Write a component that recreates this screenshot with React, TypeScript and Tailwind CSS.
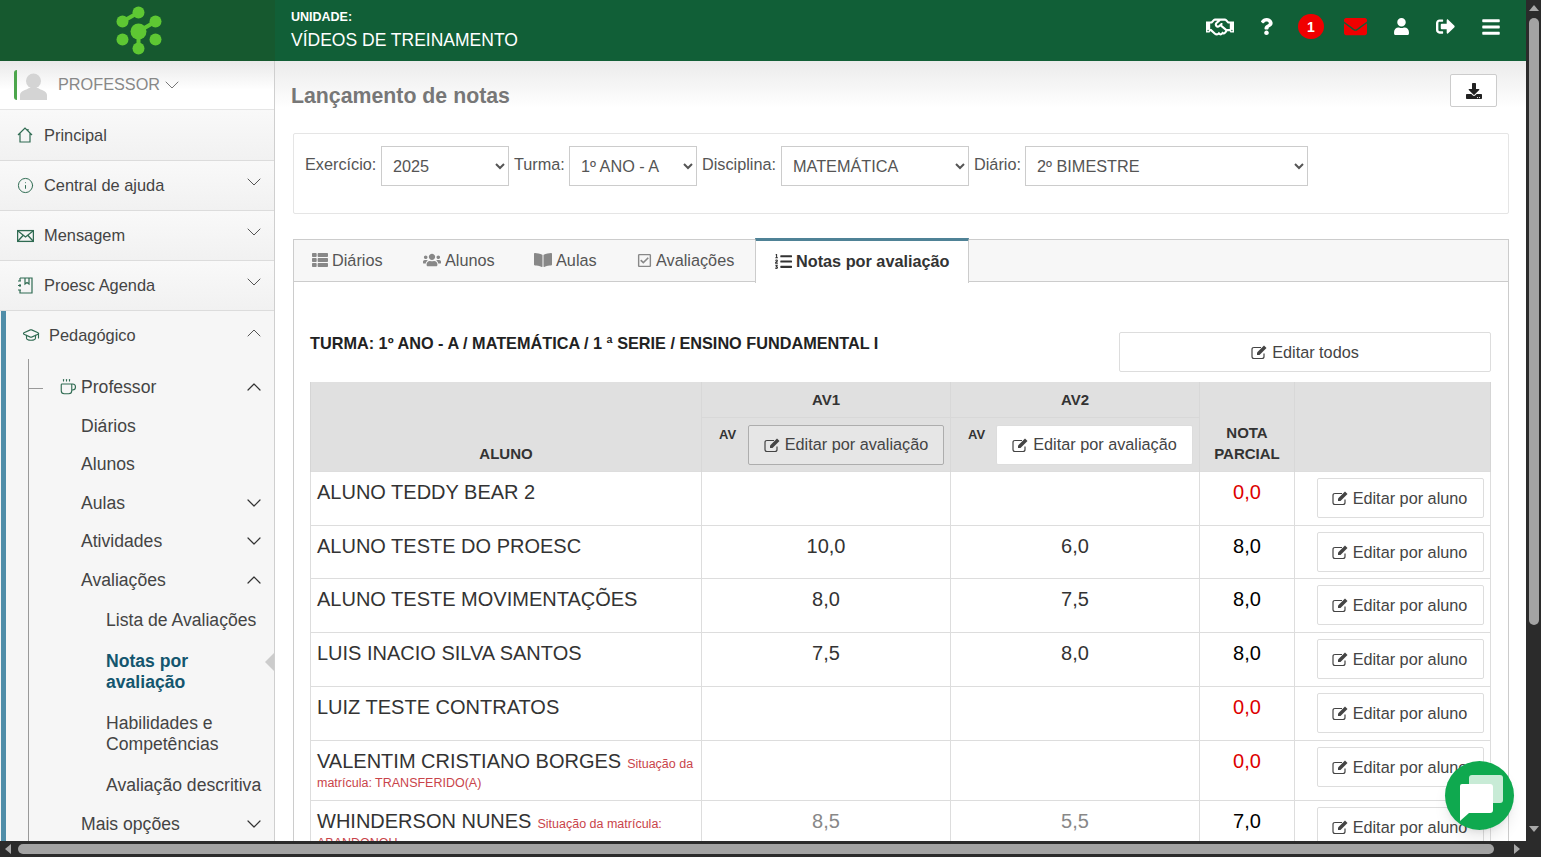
import { ChevronDown, ChevronUp, Coffee, GraduationCap, Info } from 'lucide-react';
import {
  FaBars,
  FaBookOpen,
  FaDownload,
  FaEnvelope,
  FaListOl,
  FaQuestion,
  FaRegCheckSquare,
  FaRegHandshake,
  FaSignOutAlt,
  FaThList,
  FaUser,
  FaUsers,
} from 'react-icons/fa';

// ── Data ─────────────────────────────────────────────────────────

interface Row {
  name: string;
  note?: string;
  av1?: string;
  av2?: string;
  total: string;
  muted?: boolean;
  height: string;
}

const rows: Row[] = [
  { name: 'ALUNO TEDDY BEAR 2', total: '0,0', height: 'h-[54px]' },
  { name: 'ALUNO TESTE DO PROESC', av1: '10,0', av2: '6,0', total: '8,0', height: 'h-[53px]' },
  { name: 'ALUNO TESTE MOVIMENTAÇÕES', av1: '8,0', av2: '7,5', total: '8,0', height: 'h-[54px]' },
  { name: 'LUIS INACIO SILVA SANTOS', av1: '7,5', av2: '8,0', total: '8,0', height: 'h-[54px]' },
  { name: 'LUIZ TESTE CONTRATOS', total: '0,0', height: 'h-[54px]' },
  {
    name: 'VALENTIM CRISTIANO BORGES',
    note: 'Situação da matrícula: TRANSFERIDO(A)',
    total: '0,0',
    height: 'h-[60px]',
  },
  {
    name: 'WHINDERSON NUNES',
    note: 'Situação da matrícula: ABANDONOU',
    av1: '8,5',
    av2: '5,5',
    total: '7,0',
    muted: true,
    height: 'h-[59px]',
  },
];

// ── Icons ────────────────────────────────────────────────────────

function Logo() {
  return (
    <svg width="48" height="52" viewBox="0 0 48 52" fill="#5ec733" stroke="none">
      <path d="M8.5 16.5 L24.5 7.5 M41.5 16.5 L24.5 26.5 M24.5 26.5 V43.5" strokeWidth="4" fill="none" stroke="#5ec733" />
      <circle cx="24.5" cy="7.5" r="6" />
      <circle cx="8.5" cy="16.5" r="6" />
      <circle cx="41.5" cy="16.5" r="6" />
      <circle cx="24.5" cy="26.5" r="8" />
      <circle cx="8.5" cy="34.5" r="6" />
      <circle cx="41.5" cy="34.5" r="6" />
      <circle cx="24.5" cy="43.5" r="6" />
    </svg>
  );
}

function HomeIcon() {
  return (
    <svg width="16" height="16" viewBox="0 0 16 16" fill="none" stroke="#2f6b52" strokeWidth="1.2">
      <path d="M1 8 L8 1 L15 8 M3 6.5 V15 H13 V6.5 M11 2 V4" />
    </svg>
  );
}

function MailIcon() {
  return (
    <svg width="17" height="14" viewBox="0 0 17 14" fill="none" stroke="#2f6b52" strokeWidth="1.3">
      <rect x="0.6" y="1.6" width="15.8" height="10.8" />
      <path d="M1 2 L8.5 8 L16 2 M1 12 L6 6.5 M16 12 L11 6.5" />
    </svg>
  );
}

function AgendaIcon() {
  return (
    <svg width="16" height="17" viewBox="0 0 16 17" fill="none" stroke="#2f6b52" strokeWidth="1.2">
      <path d="M3 1 H15 V16 H3 V13 M3 10 V7 M3 4 V1" />
      <path d="M8 1 V7 L10 5.5 L12 7 V1" />
      <path d="M1 4 H4 M1 8.5 H4 M1 13 H4" />
    </svg>
  );
}

function EditIcon() {
  return (
    <svg width="17" height="16" viewBox="0 0 17 16" fill="none">
      <path d="M13 9.5 V12.5 Q13 14.5 11 14.5 H3 Q1 14.5 1 12.5 V5.5 Q1 3.5 3 3.5 H10" stroke="currentColor" strokeWidth="1.2" />
      <path d="M6 11 V8.5 L13 1.5 L15.5 4 L8.5 11 Z" fill="currentColor" />
    </svg>
  );
}

function Avatar() {
  return (
    <svg width="27" height="27" viewBox="0 0 27 27" fill="#d4d4d4">
      <circle cx="13.5" cy="8" r="7.5" />
      <path d="M0 27 V22 C0 18 6 17 9 15 H18 C21 17 27 18 27 22 V27 Z" />
    </svg>
  );
}

function ChatBubble() {
  return (
    <svg width="69" height="69" viewBox="0 0 69 69">
      <rect x="24" y="14" width="34" height="28" rx="3" fill="#c8ebd6" />
      <path d="M17 23 H45 Q48 23 48 26 V49 Q48 52 45 52 H24 L15 60 V25 Q15 23 17 23 Z" fill="#ffffff" />
    </svg>
  );
}

// ── Sidebar ──────────────────────────────────────────────────────

function TopItem({
  icon,
  label,
  chevron,
  height = 'h-[50px]',
}: {
  icon: React.ReactNode;
  label: string;
  chevron?: boolean;
  height?: string;
}) {
  return (
    <div className={`flex ${height} shrink-0 items-center border-b border-[#dcdcdc] bg-linear-to-b from-[#f9f9f9] to-[#f1f1f1] pl-[17px] pr-[8px]`}>
      <span className="flex w-[27px] shrink-0">{icon}</span>
      <span className="flex-1 text-[16.4px] text-[#444]">{label}</span>
      {chevron && <ChevronDown size={24} strokeWidth={1} className="mb-2 text-[#555]" />}
    </div>
  );
}

function SubItem({
  label,
  open,
  closed,
}: {
  label: string;
  open?: boolean;
  closed?: boolean;
}) {
  return (
    <div className="flex h-[38.5px] items-center pl-[81px] pr-[8px] text-[17.6px] text-[#444]">
      <span className="flex-1">{label}</span>
      {open && <ChevronUp size={24} strokeWidth={1.2} className="text-[#333]" />}
      {closed && <ChevronDown size={24} strokeWidth={1.2} className="text-[#333]" />}
    </div>
  );
}

function Sidebar() {
  return (
    <aside className="flex h-full w-[275px] shrink-0 flex-col overflow-hidden border-r border-[#cfcfcf] bg-[#f4f4f4]">
      <div className="flex h-[49px] shrink-0 items-center border-b border-[#e5e5e5] bg-linear-to-b from-[#e9e9e9] to-white to-[60%] pl-[14px]">
        <span className="h-[30px] w-[3px] rounded-l bg-[#4ca64c]" />
        <span className="ml-[3px] mt-[2px] flex">
          <Avatar />
        </span>
        <span className="mb-[2px] ml-[11px] text-[16.25px] text-[#888]">PROFESSOR</span>
        <ChevronDown size={24} strokeWidth={1} className="text-[#777]" />
      </div>
      <TopItem icon={<HomeIcon />} label="Principal" height="h-[51px]" />
      <TopItem icon={<Info size={17} strokeWidth={1.4} className="text-[#2f6b52]" />} label="Central de ajuda" chevron />
      <TopItem icon={<MailIcon />} label="Mensagem" chevron />
      <TopItem icon={<AgendaIcon />} label="Proesc Agenda" chevron />
      <div className="ml-px shrink-0 border-l-[5px] border-[#4f8da8] bg-[#f6f6f6]">
        <div className="flex h-[50px] items-center pb-[2px] pl-[16px] pr-[8px]">
          <GraduationCap size={18} strokeWidth={1.5} className="mr-[9px] text-[#2f6b52]" />
          <span className="flex-1 text-[16.4px] text-[#444]">Pedagógico</span>
          <ChevronUp size={24} strokeWidth={1} className="mb-1 text-[#555]" />
        </div>
        <div className="relative -ml-[6px] pb-10 pt-[7px]">
          <span className="absolute left-[28px] top-[-2px] h-[500px] w-px bg-[#999]" />
          <span className="absolute left-[28px] top-[27px] h-px w-[15px] bg-[#999]" />
          <div className="relative flex h-[38.5px] items-center pl-[59px] pr-[8px] text-[17.6px] text-[#444]">
            <Coffee size={18} strokeWidth={1.5} className="mr-[4px] text-[#2f6b52]" />
            <span className="flex-1">Professor</span>
            <ChevronUp size={24} strokeWidth={1.2} className="text-[#333]" />
          </div>
          <SubItem label="Diários" />
          <SubItem label="Alunos" />
          <SubItem label="Aulas" closed />
          <SubItem label="Atividades" closed />
          <SubItem label="Avaliações" open />
          <div className="mt-[2px] flex h-[39px] items-center pl-[106px] text-[17.6px] text-[#444]">Lista de Avaliações</div>
          <div className="relative pb-[10px] pl-[106px] pr-[60px] pt-[11px] text-[17.6px] font-bold leading-[21px] text-[#14566f]">
            Notas por avaliação
            <span className="absolute right-0 top-[13px] h-0 w-0 border-y-[9px] border-r-[9px] border-y-transparent border-r-[#cccccc]" />
          </div>
          <div className="py-[10px] pl-[106px] pr-[30px] text-[17.6px] leading-[21px] text-[#444]">Habilidades e Competências</div>
          <div className="mt-px flex h-[39px] items-center whitespace-nowrap pl-[106px] text-[17.6px] text-[#444]">Avaliação descritiva</div>
          <SubItem label="Mais opções" closed />
        </div>
      </div>
    </aside>
  );
}

// ── Main content ─────────────────────────────────────────────────

function Filter({ label, value, width, labelWidth }: { label: string; value: string; width: string; labelWidth: string }) {
  return (
    <div className="flex items-start">
      <label className={`${labelWidth} pt-[6px] text-[16.25px] text-[#555]`}>{label}</label>
      <select className={`${width} h-10 border border-[#ccc] bg-white pl-[7px] text-[16.25px] text-[#555]`} defaultValue={value}>
        <option>{value}</option>
      </select>
    </div>
  );
}

function Tab({ icon, label, className }: { icon: React.ReactNode; label: string; className: string }) {
  return (
    <div className={`flex h-[40px] items-center gap-[4px] text-[16.25px] text-[#555] ${className}`}>
      <span className="text-[#888]">{icon}</span>
      {label}
    </div>
  );
}

function EditButton({ label, className }: { label: string; className: string }) {
  return (
    <button className={`flex h-10 items-center justify-center gap-[4px] rounded-[2px] border text-[16.25px] text-[#444] ${className}`}>
      <EditIcon />
      {label}
    </button>
  );
}

function GradeTable() {
  return (
    <table className="w-[1180px] table-fixed border-collapse">
      <colgroup>
        <col className="w-[391px]" />
        <col className="w-[249px]" />
        <col className="w-[249px]" />
        <col className="w-[95px]" />
        <col className="w-[196px]" />
      </colgroup>
      <thead className="bg-[#e0e0e0] text-[15px] font-bold text-[#333]">
        <tr className="h-[35px]">
          <th rowSpan={2} className="border-l border-[#d5d5d5] pb-[5px] align-bottom">ALUNO</th>
          <th className="border-x border-b border-[#d8d8d8] pt-[2px]">AV1</th>
          <th className="border-x border-b border-[#d8d8d8] pt-[2px]">AV2</th>
          <th rowSpan={2} className="border-x border-[#d8d8d8] pb-[7px] align-bottom leading-[21px]">NOTA<br />PARCIAL</th>
          <th rowSpan={2} className="border-r border-[#d5d5d5]" />
        </tr>
        <tr className="h-[54px]">
          <th className="border-x border-[#d8d8d8] align-top">
            <div className="flex items-start pl-[17px] pt-[7px]">
              <span className="w-[29px] text-left text-[13px]">AV</span>
              <EditButton label="Editar por avaliação" className="w-[196px] border-[#adadad] bg-[#e6e6e6] font-normal" />
            </div>
          </th>
          <th className="border-x border-[#d8d8d8] align-top">
            <div className="flex items-start pl-[17px] pt-[7px]">
              <span className="w-[28px] text-left text-[13px]">AV</span>
              <EditButton label="Editar por avaliação" className="w-[197px] border-[#ddd] bg-white font-normal" />
            </div>
          </th>
        </tr>
      </thead>
      <tbody>
        {rows.map((row) => (
          <tr key={row.name} className={row.height}>
            <td className="border border-[#ddd] px-[6px] pt-[12px] align-top text-xl leading-[16px] text-[#333]">
              {row.name}
              {row.note && <span className="ml-[6px] text-[12.5px] text-[#c9444a]">{row.note}</span>}
            </td>
            <td className={`border border-[#ddd] pt-[7px] text-center align-top text-xl leading-[26px] ${row.muted ? 'text-[#888]' : 'text-[#333]'}`}>
              {row.av1}
            </td>
            <td className={`border border-[#ddd] pt-[7px] text-center align-top text-xl leading-[26px] ${row.muted ? 'text-[#888]' : 'text-[#333]'}`}>
              {row.av2}
            </td>
            <td className={`border border-[#ddd] pt-[7px] text-center align-top text-xl leading-[26px] ${row.total === '0,0' ? 'text-[#dd0000]' : 'text-black'}`}>
              {row.total}
            </td>
            <td className="border border-[#ddd] pl-[22px] pt-[6px] align-top">
              <EditButton label="Editar por aluno" className="w-[167px] border-[#ddd] bg-white pr-[2px] pt-px" />
            </td>
          </tr>
        ))}
      </tbody>
    </table>
  );
}

function Main() {
  return (
    <main className="h-full flex-1 overflow-hidden bg-white">
      <div className="flex h-[72px] items-start justify-between bg-linear-to-b from-[#ebebeb] to-white to-[65%] pl-4 pr-[29px] pt-[13px]">
        <h1 className="pt-[9px] text-[21.3px] font-bold leading-[26px] text-[#777]">Lançamento de notas</h1>
        <button className="flex h-[33px] w-[47px] items-center justify-center rounded-[2px] border border-[#ccc] bg-white text-[#222]">
          <FaDownload size={16} />
        </button>
      </div>

      <div className="ml-[18px] flex h-[81px] w-[1216px] gap-[5px] rounded-[2px] border border-[#e5e5e5] pl-[11px] pt-3">
        <Filter label="Exercício:" value="2025" labelWidth="w-[76px]" width="w-[128px]" />
        <Filter label="Turma:" value="1º ANO - A" labelWidth="w-[55px]" width="w-[128px]" />
        <Filter label="Disciplina:" value="MATEMÁTICA" labelWidth="w-[79px]" width="w-[188px]" />
        <Filter label="Diário:" value="2º BIMESTRE" labelWidth="w-[51px]" width="w-[283px]" />
      </div>

      <div className="ml-[18px] mt-[25px] w-[1216px] border-x border-t border-[#ccc] pb-10">
        <div className="flex h-[42px] border-b border-[#ccc] bg-[#f7f7f7]">
          <Tab icon={<FaThList size={16} />} label="Diários" className="ml-[18px] w-[111px]" />
          <Tab icon={<FaUsers size={18} />} label="Alunos" className="w-[111px]" />
          <Tab icon={<FaBookOpen size={18} />} label="Aulas" className="w-[103px]" />
          <Tab icon={<FaRegCheckSquare size={15} />} label="Avaliações" className="w-[118px]" />
          <div className="relative -mt-[2px] flex h-[45px] w-[214px] items-center gap-[4px] border-x border-t-[3px] border-[#ccc] border-t-[#4f8296] bg-white pb-[2px] pl-[19px] text-[16.25px] font-bold text-[#333]">
            <FaListOl size={17} />
            Notas por avaliação
          </div>
        </div>
        <div className="pl-4 pr-[17px] pt-[50px]">
          <div className="flex h-[50px] items-start justify-between">
            <span className="text-[16.25px] font-bold leading-[22px] text-[#222]">
              TURMA: 1º ANO - A / MATEMÁTICA / 1 ª SERIE / ENSINO FUNDAMENTAL I
            </span>
            <EditButton label="Editar todos" className="w-[372px] border-[#ddd] bg-white" />
          </div>
          <GradeTable />
        </div>
      </div>
    </main>
  );
}

// ── Page ─────────────────────────────────────────────────────────

export default function App() {
  return (
    <div className="relative flex h-[857px] w-[1541px] flex-col overflow-hidden bg-[#2b2b2b] font-['Liberation_Sans',Arial,sans-serif]">
      <div className="flex h-[841px] shrink-0">
        <div className="flex h-full w-[1526px] shrink-0 flex-col">
          <header className="flex h-[61px] shrink-0 bg-[#115f37] text-white">
            <div className="flex w-[275px] shrink-0 items-center justify-center bg-[#16592f]">
              <Logo />
            </div>
            <div className="flex flex-1 items-center justify-between pl-4 pr-[25px]">
              <div>
                <div className="text-[12.5px] font-bold leading-[14px]">UNIDADE:</div>
                <div className="mt-[5px] text-[17.5px] leading-[22px]">VÍDEOS DE TREINAMENTO</div>
              </div>
              <div className="mb-[8px] flex items-center">
                <FaRegHandshake size={28} />
                <FaQuestion size={17} className="ml-[24px]" />
                <span className="ml-[23px] flex h-[25px] w-[26px] items-center justify-center rounded-full bg-[#f00000] text-sm font-bold">1</span>
                <FaEnvelope size={23} className="ml-[20px] text-[#f00000]" />
                <FaUser size={17} className="ml-[26px]" />
                <FaSignOutAlt size={19} className="ml-[26px]" />
                <FaBars size={20} className="ml-[26px]" />
              </div>
            </div>
          </header>
          <div className="flex min-h-0 flex-1">
            <Sidebar />
            <Main />
          </div>
        </div>

        {/* Barra de rolagem vertical */}
        <div className="flex flex-1 flex-col items-center pt-[5px]">
          <span className="h-0 w-0 border-x-[5px] border-b-[6px] border-x-transparent border-b-[#a8a8a8]" />
          <span className="mt-[7px] h-[607px] w-[10px] rounded-full bg-[#a3a3a3]" />
          <span className="mt-[201px] h-0 w-0 border-x-[5px] border-t-[6px] border-x-transparent border-t-[#a8a8a8]" />
        </div>
      </div>

      {/* Barra de rolagem horizontal */}
      <div className="flex h-4 items-center pl-[5px]">
        <span className="h-0 w-0 border-y-[5px] border-r-[6px] border-y-transparent border-r-[#a8a8a8]" />
        <span className="ml-[7px] h-[10px] w-[1476px] rounded-full bg-[#a3a3a3]" />
        <span className="ml-[20px] h-0 w-0 border-y-[5px] border-l-[6px] border-y-transparent border-l-[#a8a8a8]" />
      </div>

      {/* Botão do chat */}
      <div className="absolute left-[1445px] top-[761px] h-[69px] w-[69px] rounded-full bg-[#0fa94f] shadow-lg">
        <ChatBubble />
      </div>
    </div>
  );
}
